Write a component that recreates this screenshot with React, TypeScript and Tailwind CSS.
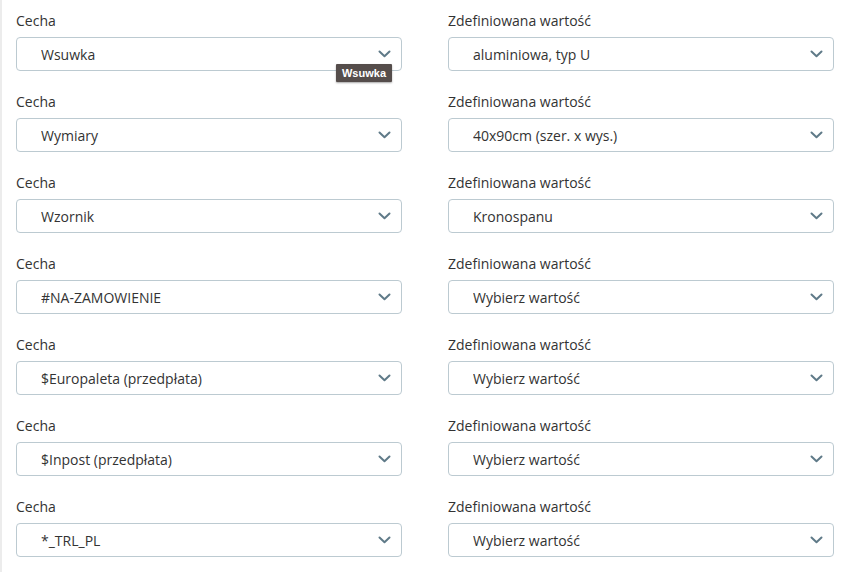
import React from 'react'

interface Wiersz {
  cecha: string
  wartosc: string
}

const wiersze: Wiersz[] = [
  { cecha: 'Wsuwka', wartosc: 'aluminiowa, typ U' },
  { cecha: 'Wymiary', wartosc: '40x90cm (szer. x wys.)' },
  { cecha: 'Wzornik', wartosc: 'Kronospanu' },
  { cecha: '#NA-ZAMOWIENIE', wartosc: 'Wybierz wartość' },
  { cecha: '$Europaleta (przedpłata)', wartosc: 'Wybierz wartość' },
  { cecha: '$Inpost (przedpłata)', wartosc: 'Wybierz wartość' },
  { cecha: '*_TRL_PL', wartosc: 'Wybierz wartość' }
]

function Chevron() {
  return (
    <svg width="13" height="8" viewBox="0 0 13 8" fill="none" className="shrink-0">
      <path d="M1.5 1.5 L6.5 6.2 L11.5 1.5" stroke="#5f7a88" strokeWidth="2" strokeLinecap="round" strokeLinejoin="round" />
    </svg>
  )
}

function Pole({ label, value, tooltip }: { label: string; value: string; tooltip?: string }) {
  return (
    <div className="flex flex-col">
      <label className="text-[14px] leading-[20px] text-[#333] mb-[6px]">{label}</label>
      <div className="relative h-[34px] rounded-[4px] border border-[#bccad1] bg-white flex items-center pl-[24px] pr-[10px]">
        <span className="flex-1 text-[14px] text-[#333] truncate">{value}</span>
        <Chevron />
        {tooltip && (
          <div
            className="absolute right-[9px] top-[26px] h-[18px] px-[6px] flex items-center bg-[#554d4b] text-white text-[11px] font-semibold rounded-[1px] shadow-[0_1px_2px_rgba(0,0,0,0.35)] z-10"
            style={{ fontFamily: '"Liberation Sans", Arial, sans-serif' }}
          >
            {tooltip}
          </div>
        )}
      </div>
    </div>
  )
}

export default function App() {
  return (
    <main
      className="w-[853px] h-[572px] overflow-hidden bg-white border-l-2 border-[#ececec] pl-[14px] pr-[18px] pt-[11px]"
      style={{ fontFamily: '"Open Sans", "Noto Sans", sans-serif' }}
    >
      <div className="flex flex-col gap-[21px]">
        {wiersze.map((w, i) => (
          <div key={i} className="grid grid-cols-[386px_386px] gap-x-[46px]">
            <Pole label="Cecha" value={w.cecha} tooltip={i === 0 ? 'Wsuwka' : undefined} />
            <Pole label="Zdefiniowana wartość" value={w.wartosc} />
          </div>
        ))}
      </div>
    </main>
  )
}
